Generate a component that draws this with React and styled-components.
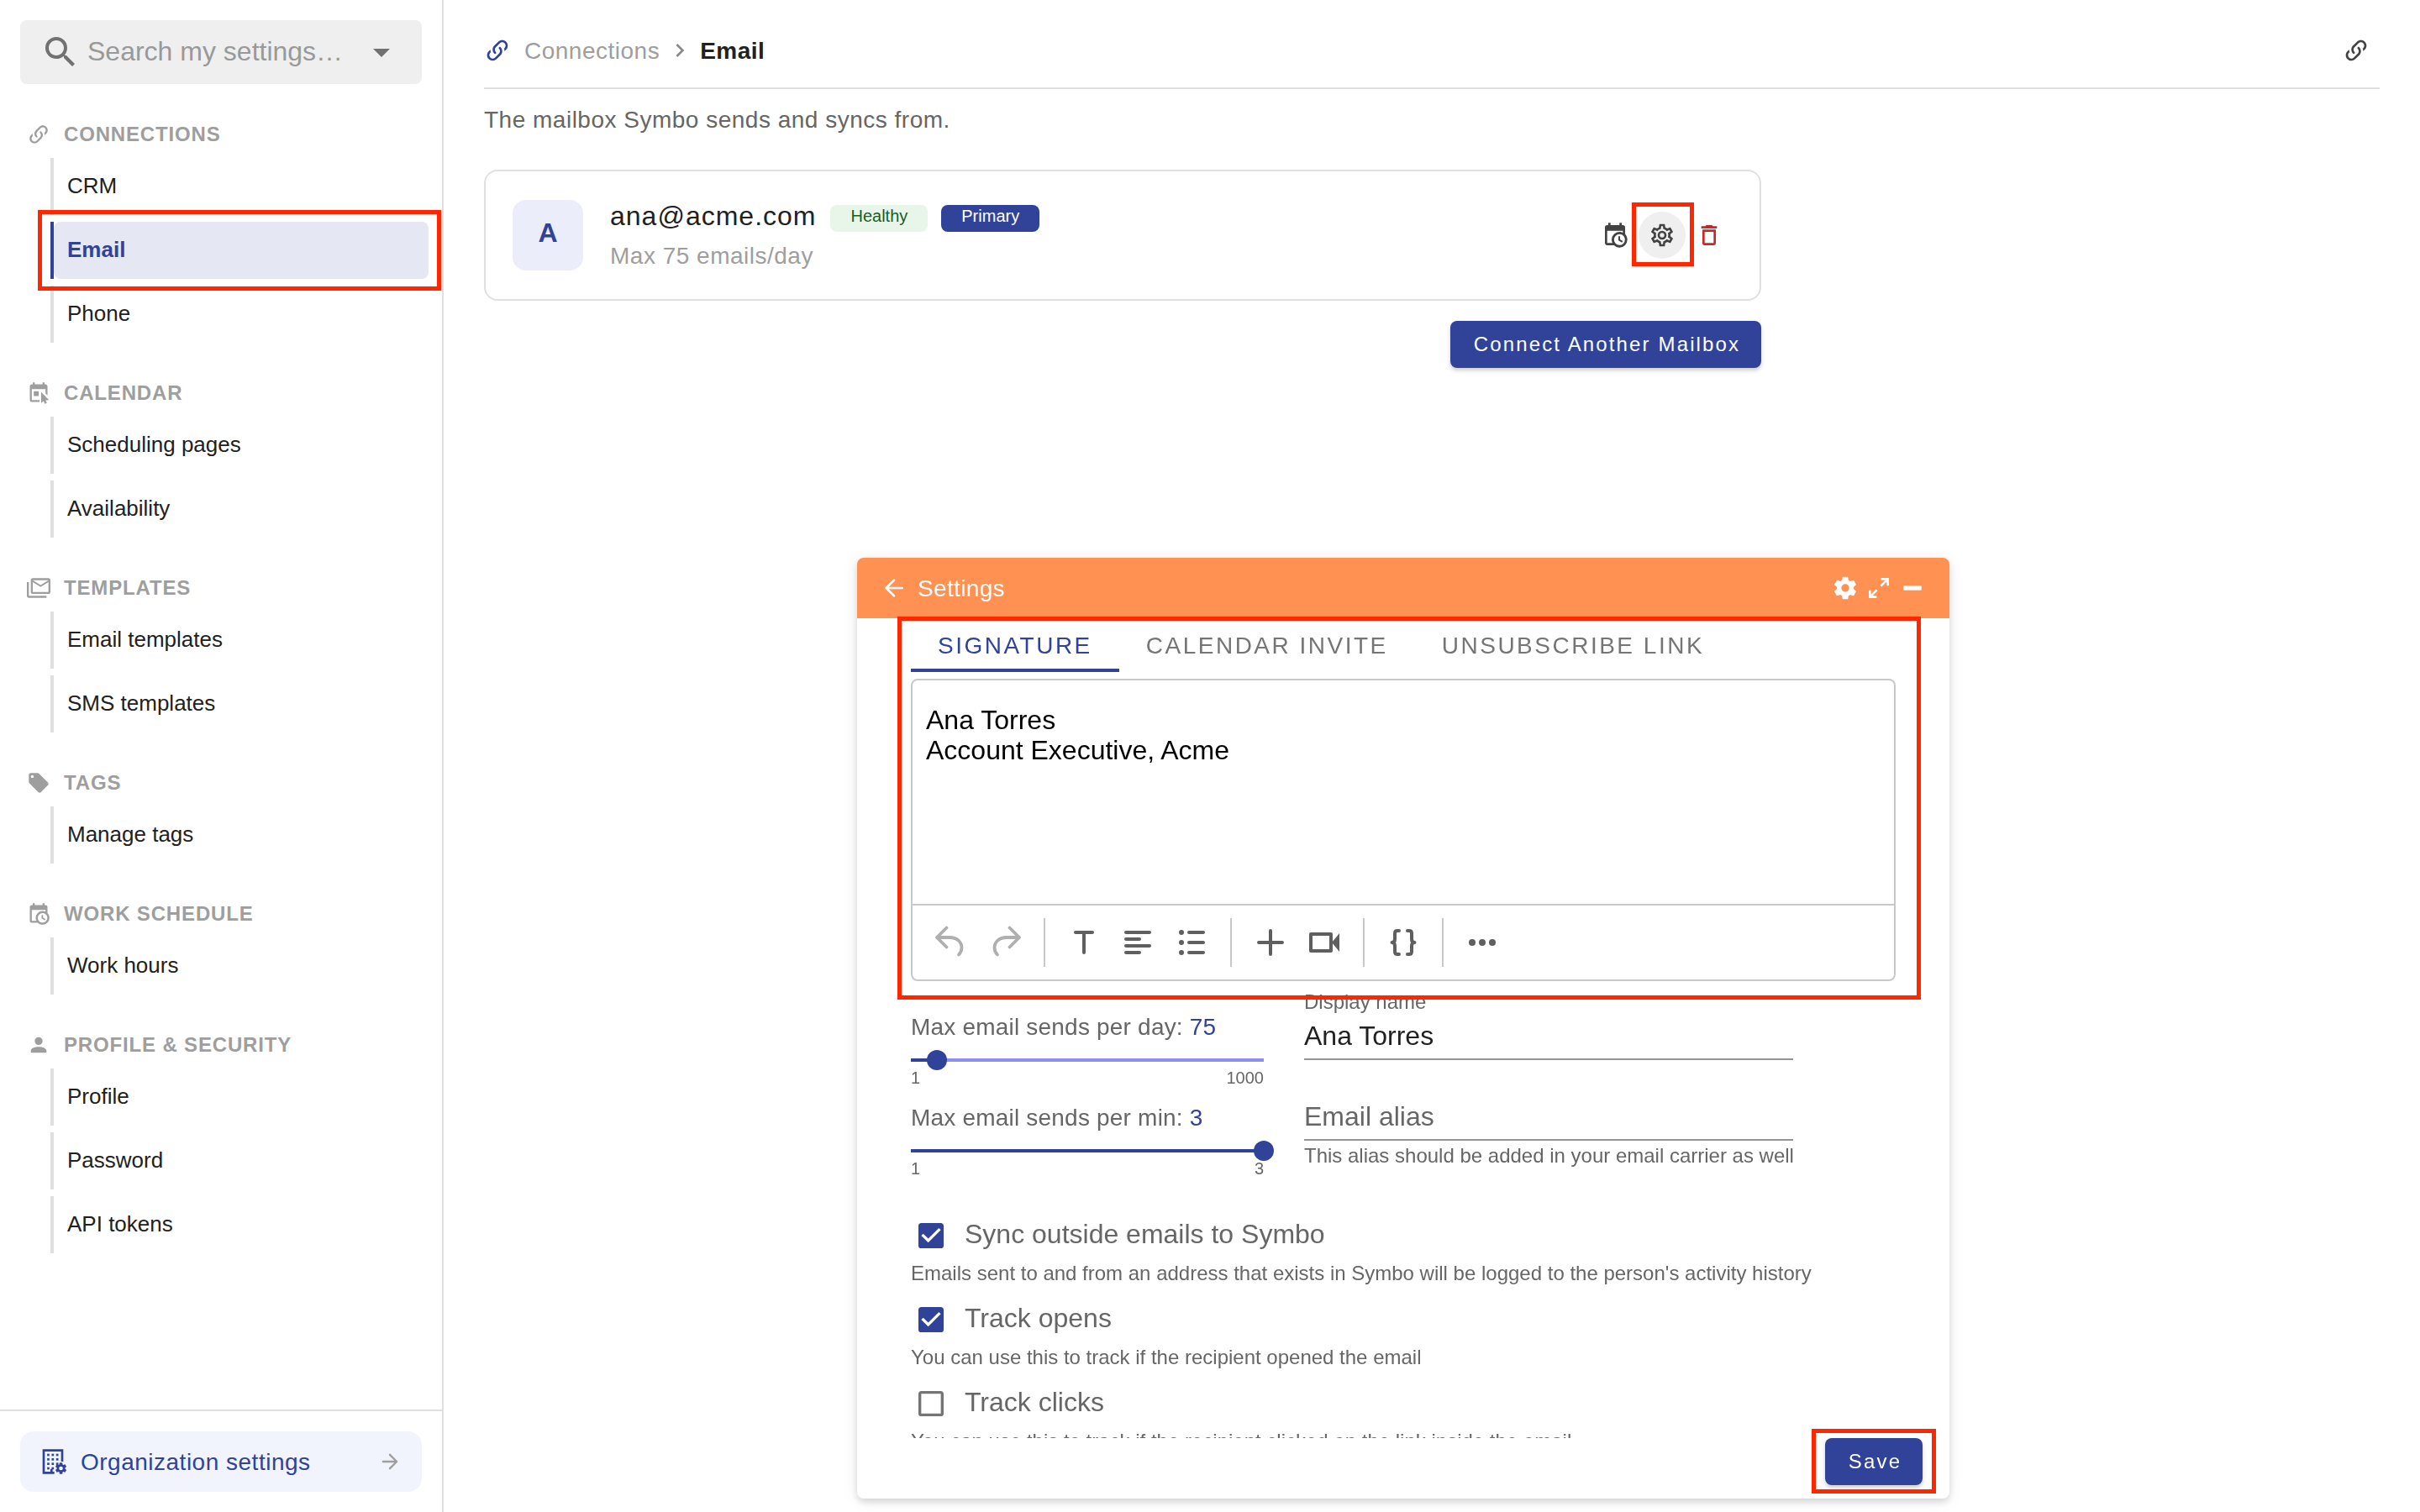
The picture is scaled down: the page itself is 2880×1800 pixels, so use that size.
import React, { useState } from "react";
import styled, { createGlobalStyle, css } from "styled-components";

const colors = {
  primary: "#304399",
  text: "#212121",
  muted: "#666666",
  faint: "#9e9e9e",
  line: "#e0e0e0",
  accent: "#ff9153",
  mark: "#ff2600",
};

const GlobalStyle = createGlobalStyle`
  * {
    box-sizing: border-box;
  }
  body {
    margin: 0;
    overflow: hidden;
    background: #fff;
    color: ${colors.text};
    font-family: "Liberation Sans", Arial, sans-serif;
  }
  button {
    font-family: inherit;
    border: 0;
    padding: 0;
    cursor: pointer;
  }
`;

// icon paths, 24x24 grid
const paths = {
  magnify:
    "M9.5,3A6.5,6.5 0 0,1 16,9.5C16,11.11 15.41,12.59 14.44,13.73L14.71,14H15.5L20.5,19L19,20.5L14,15.5V14.71L13.73,14.44C12.59,15.41 11.11,16 9.5,16A6.5,6.5 0 0,1 3,9.5A6.5,6.5 0 0,1 9.5,3M9.5,5C7,5 5,7 5,9.5C5,12 7,14 9.5,14C12,14 14,12 14,9.5C14,7 12,5 9.5,5Z",
  menuDown: "M7,10L12,15L17,10H7Z",
  link: "M10.59,13.41C11,13.8 11,14.44 10.59,14.83C10.2,15.22 9.56,15.22 9.17,14.83C7.22,12.88 7.22,9.71 9.17,7.76V7.76L12.71,4.22C14.66,2.27 17.83,2.27 19.78,4.22C21.73,6.17 21.73,9.34 19.78,11.29L18.29,12.78C18.3,11.96 18.17,11.14 17.89,10.36L18.36,9.88C19.54,8.71 19.54,6.81 18.36,5.64C17.19,4.46 15.29,4.46 14.12,5.64L10.59,9.17C9.41,10.34 9.41,12.24 10.59,13.41M13.41,9.17C13.8,8.78 14.44,8.78 14.83,9.17C16.78,11.12 16.78,14.29 14.83,16.24V16.24L11.29,19.78C9.34,21.73 6.17,21.73 4.22,19.78C2.27,17.83 2.27,14.66 4.22,12.71L5.71,11.22C5.7,12.04 5.83,12.86 6.11,13.65L5.64,14.12C4.46,15.29 4.46,17.19 5.64,18.36C6.81,19.54 8.71,19.54 9.88,18.36L13.41,14.83C14.59,13.66 14.59,11.76 13.41,10.59C13,10.2 13,9.56 13.41,9.17Z",
  calendarCursor:
    "M19,3H18V1H16V3H8V1H6V3H5C3.89,3 3,3.9 3,5V19C3,20.1 3.89,21 5,21H13V19H5V8H19V12.5L21,14.3V5C21,3.9 20.1,3 19,3M7,10V15H12V10H7M14.5,11V22L17,20.2L18.3,23L20.4,22L19.1,19.3L22.5,19L14.5,11Z",
  mailMultiple:
    "M22,2H6C4.9,2 4,2.9 4,4V16C4,17.1 4.9,18 6,18H22C23.1,18 24,17.1 24,16V4C24,2.9 23.1,2 22,2M22,16H6V6L14,11L22,6V16M14,9L6,4H22L14,9M2,6H0V20C0,21.1 0.9,22 2,22H20V20H2V6Z",
  tag: "M5.5,7A1.5,1.5 0 0,1 4,5.5A1.5,1.5 0 0,1 5.5,4A1.5,1.5 0 0,1 7,5.5A1.5,1.5 0 0,1 5.5,7M21.41,11.58L12.41,2.58C12.05,2.22 11.55,2 11,2H4C2.89,2 2,2.89 2,4V11C2,11.55 2.22,12.05 2.59,12.41L11.58,21.41C11.95,21.77 12.45,22 13,22C13.55,22 14.05,21.77 14.41,21.41L21.41,14.41C21.78,14.05 22,13.55 22,13C22,12.44 21.77,11.94 21.41,11.58Z",
  calendarClock:
    "M15,13H16.5V15.82L18.94,17.23L18.19,18.53L15,16.69V13M19,8H5V19H9.67C9.24,18.09 9,17.07 9,16A7,7 0 0,1 16,9C17.07,9 18.09,9.24 19,9.67V8M5,21C3.89,21 3,20.1 3,19V5C3,3.89 3.89,3 5,3H6V1H8V3H16V1H18V3H19A2,2 0 0,1 21,5V11.1C22.24,12.36 23,14.09 23,16A7,7 0 0,1 16,23C14.09,23 12.36,22.24 11.1,21H5M16,11.15A4.85,4.85 0 0,0 11.15,16C11.15,18.68 13.32,20.85 16,20.85A4.85,4.85 0 0,0 20.85,16C20.85,13.32 18.68,11.15 16,11.15Z",
  account:
    "M12,4A4,4 0 0,1 16,8A4,4 0 0,1 12,12A4,4 0 0,1 8,8A4,4 0 0,1 12,4M12,14C16.42,14 20,15.79 20,18V20H4V18C4,15.79 7.58,14 12,14Z",
  chevronRight:
    "M8.59,16.58L13.17,12L8.59,7.41L10,6L16,12L10,18L8.59,16.58Z",
  cogOutline:
    "M12,8A4,4 0 0,1 16,12A4,4 0 0,1 12,16A4,4 0 0,1 8,12A4,4 0 0,1 12,8M12,10A2,2 0 0,0 10,12A2,2 0 0,0 12,14A2,2 0 0,0 14,12A2,2 0 0,0 12,10M10,22C9.75,22 9.54,21.82 9.5,21.58L9.13,18.93C8.5,18.68 7.96,18.34 7.44,17.94L4.95,18.95C4.73,19.03 4.46,18.95 4.34,18.73L2.34,15.27C2.21,15.05 2.27,14.78 2.46,14.63L4.57,12.97L4.5,12L4.57,11L2.46,9.37C2.27,9.22 2.21,8.95 2.34,8.73L4.34,5.27C4.46,5.05 4.73,4.96 4.95,5.05L7.44,6.05C7.96,5.66 8.5,5.32 9.13,5.07L9.5,2.42C9.54,2.18 9.75,2 10,2H14C14.25,2 14.46,2.18 14.5,2.42L14.87,5.07C15.5,5.32 16.04,5.66 16.56,6.05L19.05,5.05C19.27,4.96 19.54,5.05 19.66,5.27L21.66,8.73C21.79,8.95 21.73,9.22 21.54,9.37L19.43,11L19.5,12L19.43,13L21.54,14.63C21.73,14.78 21.79,15.05 21.66,15.27L19.66,18.73C19.54,18.95 19.27,19.04 19.05,18.95L16.56,17.95C16.04,18.34 15.5,18.68 14.87,18.93L14.5,21.58C14.46,21.82 14.25,22 14,22H10M11.25,4L10.88,6.61C9.68,6.86 8.62,7.5 7.85,8.39L5.44,7.35L4.69,8.65L6.8,10.2C6.4,11.37 6.4,12.64 6.8,13.8L4.68,15.36L5.43,16.66L7.86,15.62C8.63,16.5 9.68,17.14 10.87,17.38L11.24,20H12.76L13.13,17.39C14.32,17.14 15.37,16.5 16.14,15.62L18.57,16.66L19.32,15.36L17.2,13.81C17.6,12.64 17.6,11.37 17.2,10.2L19.31,8.65L18.56,7.35L16.15,8.39C15.38,7.5 14.32,6.86 13.12,6.62L12.75,4H11.25Z",
  cog: "M12,15.5A3.5,3.5 0 0,1 8.5,12A3.5,3.5 0 0,1 12,8.5A3.5,3.5 0 0,1 15.5,12A3.5,3.5 0 0,1 12,15.5M19.43,12.97C19.47,12.65 19.5,12.33 19.5,12C19.5,11.67 19.47,11.34 19.43,11L21.54,9.37C21.73,9.22 21.78,8.95 21.66,8.73L19.66,5.27C19.54,5.05 19.27,4.96 19.05,5.05L16.56,6.05C16.04,5.66 15.5,5.32 14.87,5.07L14.5,2.42C14.46,2.18 14.25,2 14,2H10C9.75,2 9.54,2.18 9.5,2.42L9.13,5.07C8.5,5.32 7.96,5.66 7.44,6.05L4.95,5.05C4.73,4.96 4.46,5.05 4.34,5.27L2.34,8.73C2.21,8.95 2.27,9.22 2.46,9.37L4.57,11C4.53,11.34 4.5,11.67 4.5,12C4.5,12.33 4.53,12.65 4.57,12.97L2.46,14.63C2.27,14.78 2.21,15.05 2.34,15.27L4.34,18.73C4.46,18.95 4.73,19.03 4.95,18.95L7.44,17.94C7.96,18.34 8.5,18.68 9.13,18.93L9.5,21.58C9.54,21.82 9.75,22 10,22H14C14.25,22 14.46,21.82 14.5,21.58L14.87,18.93C15.5,18.67 16.04,18.34 16.56,17.94L19.05,18.95C19.27,19.03 19.54,18.95 19.66,18.73L21.66,15.27C21.78,15.05 21.73,14.78 21.54,14.63L19.43,12.97Z",
  trash:
    "M6,19A2,2 0 0,0 8,21H16A2,2 0 0,0 18,19V7H6V19M8,9H16V19H8V9M15.5,4L14.5,3H9.5L8.5,4H5V6H19V4H15.5Z",
  expand:
    "M10,21V19H6.41L10.91,14.5L9.5,13.09L5,17.59V14H3V21H10M14.5,10.91L19,6.41V10H21V3H14V5H17.59L13.09,9.5L14.5,10.91Z",
  minus: "M20,14H4V10H20V14Z",
  checkboxOn:
    "M10,17L5,12L6.41,10.58L10,14.17L17.59,6.58L19,8M19,3H5C3.89,3 3,3.89 3,5V19A2,2 0 0,0 5,21H19A2,2 0 0,0 21,19V5C21,3.89 20.1,3 19,3Z",
  checkboxOff:
    "M19,3H5C3.89,3 3,3.89 3,5V19A2,2 0 0,0 5,21H19A2,2 0 0,0 21,19V5C21,3.89 20.1,3 19,3M19,5V19H5V5H19Z",
};

const Svg = styled.svg`
  display: block;
  flex: none;
  width: ${(p) => p.$size}px;
  height: ${(p) => p.$size}px;
  color: ${(p) => p.$color || "inherit"};
`;

const Icon = ({ name, size = 32, color }) => (
  <Svg viewBox="0 0 24 24" $size={size} $color={color}>
    <path d={paths[name]} fill="currentColor" />
  </Svg>
);

const ArrowIcon = ({ left, size, color }) => (
  <Svg
    viewBox="0 0 24 24"
    $size={size}
    $color={color}
    fill="none"
    stroke="currentColor"
    strokeWidth="2"
    strokeLinecap="round"
    strokeLinejoin="round"
  >
    <path d={left ? "M19.3 12H5M12 19L5 12L12 5" : "M5 12H19M12 5L19 12L12 19"} />
  </Svg>
);

const OfficeCogIcon = () => (
  <Svg viewBox="0 0 24 24" $size={32} $color={colors.primary}>
    <path
      d="M2,1H20.5V12H18.5V3H4V21H9V18.5H11V21H12.5V23H2V1Z"
      fill="currentColor"
    />
    {[5, 9, 13, 17].map((y) =>
      [6.1, 10.1, 14.1]
        .filter((x) => !(y === 17 && x > 11) && !(y === 13 && x > 14.2))
        .map((x) => (
          <rect key={`${x}-${y}`} x={x} y={y} width="2" height="2" fill="currentColor" />
        ))
    )}
    <g transform="translate(12.4 12) scale(0.5)">
      <path d={paths.cog} fill="currentColor" />
    </g>
  </Svg>
);

/* sidebar */

const Page = styled.div`
  display: flex;
  height: 1800px;
`;

const Sidebar = styled.aside`
  display: flex;
  flex-direction: column;
  width: 528px;
  flex: none;
  border-right: 2px solid ${colors.line};
`;

const SearchBox = styled.div`
  display: flex;
  align-items: center;
  height: 76px;
  margin: 24px 24px 0;
  padding: 0 24px;
  border-radius: 8px;
  background: #efefef;
  color: #717171;
`;

const SearchText = styled.span`
  flex: 1;
  margin-left: 8px;
  padding-bottom: 2px;
  font-size: 32px;
  line-height: 40px;
  color: #999;
`;

const Sections = styled.nav`
  flex: 1;
`;

const Section = styled.section`
  margin-top: 32px;
`;

const SectionTitle = styled.div`
  display: flex;
  align-items: center;
  gap: 16px;
  height: 56px;
  padding-left: 32px;
  font-size: 24px;
  font-weight: 700;
  letter-spacing: 0.84px;
  color: ${colors.faint};
`;

const NavList = styled.div`
  display: flex;
  flex-direction: column;
  gap: 8px;
  padding: 0 16px 0 60px;
`;

const NavItem = styled.div`
  position: relative;
  display: flex;
  height: 68px;
  font-size: 26px;
  line-height: 66px;
  border-left: 4px solid ${colors.line};

  ${(p) =>
    p.$active &&
    css`
      border-color: ${colors.primary};
      color: ${colors.primary};
      font-weight: 700;
    `}
`;

const NavLabel = styled.span`
  flex: 1;
  padding-left: 16px;
  border-radius: 8px;
  background: ${(p) => (p.$active ? "#e5e8f3" : "transparent")};
`;

const SidebarFooter = styled.div`
  padding: 24px;
  border-top: 2px solid ${colors.line};
`;

const OrgLink = styled.div`
  display: flex;
  align-items: center;
  height: 72px;
  padding: 0 24px;
  gap: 16px;
  border-radius: 16px;
  background: #f2f4fd;
  color: ${colors.primary};
  font-size: 28px;
  letter-spacing: 0.5px;
`;

const OrgLabel = styled.span`
  flex: 1;
  padding-top: 1px;
`;

/* main column */

const Main = styled.main`
  flex: 1;
  padding: 0 48px;
`;

const Crumbs = styled.header`
  display: flex;
  align-items: flex-start;
  height: 106px;
  padding: 44px 12px 0 0;
  border-bottom: 2px solid ${colors.line};
  font-size: 28px;
  line-height: 34px;
  letter-spacing: 0.5px;
`;

const Crumb = styled.span`
  margin-left: 16px;
  margin-right: 8px;
  color: ${colors.faint};
`;

const CrumbCurrent = styled.span`
  flex: 1;
  margin-left: 8px;
  font-weight: 700;
`;

const Lead = styled.p`
  margin: 0;
  height: 96px;
  padding-top: 21px;
  font-size: 28px;
  line-height: 32px;
  letter-spacing: 0.5px;
  color: ${colors.muted};
`;

const Content = styled.div`
  display: flex;
  flex-direction: column;
  align-items: flex-end;
  gap: 24px;
  width: 1520px;
`;

const Card = styled.div`
  display: flex;
  align-items: center;
  width: 100%;
  height: 156px;
  padding: 0 32px;
  border: 2px solid ${colors.line};
  border-radius: 16px;
`;

const Avatar = styled.div`
  width: 84px;
  height: 84px;
  border-radius: 16px;
  background: #ebedfb;
  color: ${colors.primary};
  font-size: 32px;
  font-weight: 700;
  line-height: 78px;
  text-align: center;
`;

const MailboxInfo = styled.div`
  flex: 1;
  margin-left: 32px;
  padding-top: 2px;
`;

const MailboxRow = styled.div`
  display: flex;
  align-items: center;
  gap: 16px;
  height: 42px;
`;

const Address = styled.span`
  margin: -6px 1px 0 0;
  font-size: 32px;
  line-height: 38px;
  letter-spacing: 1px;
`;

const Chip = styled.span`
  height: 32px;
  padding: 0 24px;
  border-radius: 8px;
  font-size: 20px;
  line-height: 26px;
  background: ${(p) => (p.$solid ? colors.primary : "#e8f5e9")};
  color: ${(p) => (p.$solid ? "#fff" : "#1b5e20")};
`;

const Limit = styled.div`
  margin-top: 6px;
  font-size: 28px;
  line-height: 36px;
  letter-spacing: 0.5px;
  color: ${colors.faint};
`;

const IconButton = styled.button`
  position: relative;
  display: flex;
  align-items: center;
  justify-content: center;
  width: 56px;
  height: 56px;
  border-radius: 50%;
  background: ${(p) => (p.$active ? "#efefef" : "transparent")};
  color: ${(p) => (p.$danger ? "#c62828" : "#424242")};
`;

const PrimaryButton = styled.button`
  height: 56px;
  width: ${(p) => p.$width}px;
  padding-left: 3px;
  border-radius: 8px;
  background: ${colors.primary};
  color: #fff;
  font-size: 24px;
  letter-spacing: 0.0892857em;
  box-shadow: 0 3px 5px rgba(0, 0, 0, 0.2);
`;

// red frame drawn over its parent, $box = top right bottom left
const Marker = styled.div`
  position: absolute;
  inset: ${(p) => p.$box};
  z-index: 2;
  border: 5px solid ${colors.mark};
  pointer-events: none;
`;

/* settings window */

const Window = styled.div`
  position: fixed;
  left: 1020px;
  top: 664px;
  width: 1300px;
  height: 1120px;
  display: flex;
  flex-direction: column;
  border-radius: 8px;
  background: #fff;
  box-shadow: 0 4px 8px rgba(0, 0, 0, 0.14), 0 2px 20px rgba(0, 0, 0, 0.07);
  will-change: transform;
`;

const TitleBar = styled.div`
  display: flex;
  align-items: center;
  gap: 8px;
  height: 72px;
  flex: none;
  padding: 0 28px;
  border-radius: 8px 8px 0 0;
  background: ${colors.accent};
  color: #fff;
`;

const Title = styled.span`
  flex: 1;
  margin-left: 4px;
  padding-top: 2px;
  font-size: 28px;
  line-height: 36px;
  letter-spacing: 0.0125em;
`;

const Body = styled.div`
  flex: 1;
  min-height: 0;
  overflow: hidden;
  padding: 0 64px;
`;

const Tabs = styled.div`
  display: flex;
  height: 64px;
  margin-bottom: 8px;
`;

const Tab = styled.div`
  padding: 0 32px;
  font-size: 28px;
  line-height: 66px;
  height: 64px;
  letter-spacing: 0.0892857em;
  color: ${(p) => (p.$active ? colors.primary : "#757575")};
  box-shadow: ${(p) => (p.$active ? `inset 0 -4px ${colors.primary}` : "none")};
`;

const Editor = styled.div`
  display: flex;
  flex-direction: column;
  height: 360px;
  border: 2px solid #c8c8c8;
  border-radius: 8px;
`;

const EditorText = styled.div`
  flex: 1;
  padding: 29px 16px 0;
  font-size: 32px;
  line-height: 36px;
  color: #000;
`;

const Toolbar = styled.div`
  display: flex;
  align-items: center;
  height: 90px;
  padding-left: 14px;
  border-top: 2px solid #c8c8c8;
`;

const ToolButton = styled.button`
  display: flex;
  align-items: center;
  justify-content: center;
  width: 64px;
  height: 64px;
  background: none;
  color: ${(p) => (p.disabled ? "#afafaf" : "#5f5f5f")};
`;

const Divider = styled.span`
  width: 2px;
  height: 58px;
  margin: 0 14px;
  background: #c8c8c8;
`;

const Fields = styled.div`
  display: grid;
  grid-template-columns: 420px 582px;
  column-gap: 48px;
  margin-top: 10px;
  height: 273px;
`;

const SliderColumn = styled.div`
  padding-top: 27px;
`;

const SliderBlock = styled.div`
  height: 108px;
  color: ${colors.muted};
`;

const SliderLabel = styled.div`
  font-size: 28px;
  line-height: 36px;
  letter-spacing: 0.2px;

  b {
    font-weight: 400;
    color: ${colors.primary};
  }
`;

const Track = styled.div`
  position: relative;
  display: flex;
  height: 4px;
  margin: 19px 0 8px;
  background: #8b8ff0;
`;

const Fill = styled.div`
  background: ${colors.primary};
`;

const Thumb = styled.div`
  flex: none;
  width: 24px;
  height: 24px;
  margin: -10px -12px;
  border-radius: 50%;
  background: ${colors.primary};
`;

const Ticks = styled.div`
  display: flex;
  justify-content: space-between;
  font-size: 20px;
  line-height: 22px;
`;

const FieldColumn = styled.div`
  color: ${colors.muted};
  font-size: 32px;
  line-height: 42px;
`;

const FieldLabel = styled.div`
  height: 34px;
  font-size: 24px;
  line-height: 30px;
`;

const FieldValue = styled.div`
  height: 50px;
  border-bottom: 2px solid #949494;
  color: ${(p) => (p.$filled ? colors.text : colors.muted)};
`;

const FieldGap = styled.div`
  height: 46px;
`;

const Hint = styled.div`
  margin-top: 4px;
  font-size: 24px;
  line-height: 28px;
  white-space: nowrap;
`;

const Option = styled.div`
  height: 100px;
  color: ${colors.muted};
`;

const OptionRow = styled.div`
  display: flex;
  gap: 20px;
  height: 51px;
  padding-left: 4px;
  font-size: 32px;
  line-height: 36px;
`;

const OptionHint = styled.div`
  font-size: 24px;
  line-height: 28px;
`;

const Footer = styled.div`
  display: flex;
  justify-content: flex-end;
  height: 72px;
  flex: none;
  padding-right: 32px;
`;

const SaveWrap = styled.div`
  position: relative;
  height: 56px;
`;

const sections = [
  { title: "CONNECTIONS", icon: "link", items: ["CRM", "Email", "Phone"] },
  {
    title: "CALENDAR",
    icon: "calendarCursor",
    items: ["Scheduling pages", "Availability"],
  },
  {
    title: "TEMPLATES",
    icon: "mailMultiple",
    items: ["Email templates", "SMS templates"],
  },
  { title: "TAGS", icon: "tag", items: ["Manage tags"] },
  { title: "WORK SCHEDULE", icon: "calendarClock", items: ["Work hours"] },
  {
    title: "PROFILE & SECURITY",
    icon: "account",
    items: ["Profile", "Password", "API tokens"],
  },
];

const tabs = ["SIGNATURE", "CALENDAR INVITE", "UNSUBSCRIBE LINK"];

const options = [
  {
    label: "Sync outside emails to Symbo",
    hint: "Emails sent to and from an address that exists in Symbo will be logged to the person's activity history",
    checked: true,
  },
  {
    label: "Track opens",
    hint: "You can use this to track if the recipient opened the email",
    checked: true,
  },
  {
    label: "Track clicks",
    hint: "You can use this to track if the recipient clicked on the link inside the email",
    checked: false,
  },
];

// toolbar drawings, 48x48 grid
const tools = [
  [
    {
      key: "undo",
      disabled: true,
      stroke: 3.8,
      d: "M18.5,6.5L7,18L18.5,29.5M7,18H22C31,18 36.5,23.5 36.5,30Q36.5,35 33,38.5",
    },
    {
      key: "redo",
      disabled: true,
      stroke: 3.8,
      d: "M29.5,6.5L41,18L29.5,29.5M41,18H26C17,18 11.5,23.5 11.5,30Q11.5,35 15,38.5",
    },
  ],
  [
    { key: "text", d: "M14,12H34M24,12V36" },
    { key: "align", d: "M10,12H38M10,20H26M10,28H38M10,36H26" },
    {
      key: "list",
      d: "M21,12H38M21,24H38M21,36H38",
      dots: "M12,12H12.01M12,24H12.01M12,36H12.01",
    },
  ],
  [
    { key: "plus", d: "M10,24H38M24,10V38" },
    { key: "video", d: "M8,14H32V34H8Z", fill: "M33,24L42,13V35Z" },
  ],
  [
    {
      key: "braces",
      d: "M19,10H17Q14,10 14,13V20Q14,24 10.5,24Q14,24 14,28V35Q14,38 17,38H19M29,10H31Q34,10 34,13V20Q34,24 37.5,24Q34,24 34,28V35Q34,38 31,38H29",
    },
  ],
  [{ key: "more", stroke: 8, d: "M12,24H12.01M24,24H24.01M36,24H36.01" }],
];

const ToolIcon = ({ tool }) => (
  <Svg
    viewBox="0 0 48 48"
    $size={48}
    fill="none"
    stroke="currentColor"
    strokeLinecap="round"
    strokeLinejoin="round"
  >
    <path d={tool.d} strokeWidth={tool.stroke || 4} />
    {tool.dots && <path d={tool.dots} strokeWidth="6" />}
    {tool.fill && <path d={tool.fill} fill="currentColor" stroke="none" />}
  </Svg>
);

const Slider = ({ label, value, min, max }) => {
  const percent = ((value - min) / (max - min)) * 100;
  return (
    <SliderBlock>
      <SliderLabel>
        {label}: <b>{value}</b>
      </SliderLabel>
      <Track>
        <Fill style={{ width: `${percent}%` }} />
        <Thumb />
      </Track>
      <Ticks>
        <span>{min}</span>
        <span>{max}</span>
      </Ticks>
    </SliderBlock>
  );
};

function SettingsNav() {
  const [current] = useState("Email");
  return (
    <Sidebar>
      <SearchBox>
        <Icon name="magnify" size={48} />
        <SearchText>Search my settings…</SearchText>
        <Icon name="menuDown" size={48} />
      </SearchBox>
      <Sections>
        {sections.map((section) => (
          <Section key={section.title}>
            <SectionTitle>
              <Icon name={section.icon} size={28} />
              {section.title}
            </SectionTitle>
            <NavList>
              {section.items.map((item) => (
                <NavItem key={item} $active={item === current}>
                  <NavLabel $active={item === current}>{item}</NavLabel>
                  {item === current && <Marker $box="-14px -15px -14px -19px" />}
                </NavItem>
              ))}
            </NavList>
          </Section>
        ))}
      </Sections>
      <SidebarFooter>
        <OrgLink>
          <OfficeCogIcon />
          <OrgLabel>Organization settings</OrgLabel>
          <ArrowIcon size={28} color={colors.faint} />
        </OrgLink>
      </SidebarFooter>
    </Sidebar>
  );
}

function SettingsWindow() {
  return (
    <Window>
      <TitleBar>
        <ArrowIcon left size={32} />
        <Title>Settings</Title>
        <Icon name="cog" />
        <Icon name="expand" />
        <Icon name="minus" />
      </TitleBar>
      <Body>
        <Tabs>
          {tabs.map((tab, idx) => (
            <Tab key={tab} $active={idx === 0}>
              {tab}
            </Tab>
          ))}
        </Tabs>
        <Editor>
          <EditorText>
            <div>Ana Torres</div>
            <div>Account Executive, Acme</div>
          </EditorText>
          <Toolbar>
            {tools.map((group, idx) => (
              <React.Fragment key={idx}>
                {idx > 0 && <Divider />}
                {group.map((tool) => (
                  <ToolButton key={tool.key} disabled={tool.disabled}>
                    <ToolIcon tool={tool} />
                  </ToolButton>
                ))}
              </React.Fragment>
            ))}
          </Toolbar>
        </Editor>
        <Fields>
          <SliderColumn>
            <Slider label="Max email sends per day" value={75} min={1} max={1000} />
            <Slider label="Max email sends per min" value={3} min={1} max={3} />
          </SliderColumn>
          <FieldColumn>
            <FieldLabel>Display name</FieldLabel>
            <FieldValue $filled>Ana Torres</FieldValue>
            <FieldGap />
            <FieldValue>Email alias</FieldValue>
            <Hint>This alias should be added in your email carrier as well</Hint>
          </FieldColumn>
        </Fields>
        {options.map((option) => (
          <Option key={option.label}>
            <OptionRow>
              <Icon
                name={option.checked ? "checkboxOn" : "checkboxOff"}
                size={40}
                color={option.checked ? colors.primary : "#757575"}
              />
              {option.label}
            </OptionRow>
            <OptionHint>{option.hint}</OptionHint>
          </Option>
        ))}
      </Body>
      <Footer>
        <SaveWrap>
          <PrimaryButton $width={116}>Save</PrimaryButton>
          <Marker $box="-11px -16px -10px -16px" />
        </SaveWrap>
      </Footer>
      <Marker $box="70px 34px 594px 48px" />
    </Window>
  );
}

export default function App() {
  return (
    <Page>
      <GlobalStyle />
      <SettingsNav />
      <Main>
        <Crumbs>
          <Icon name="link" color={colors.primary} />
          <Crumb>Connections</Crumb>
          <Icon name="chevronRight" color="#8a8a8a" />
          <CrumbCurrent>Email</CrumbCurrent>
          <Icon name="link" color="#424242" />
        </Crumbs>
        <Lead>The mailbox Symbo sends and syncs from.</Lead>
        <Content>
          <Card>
            <Avatar>A</Avatar>
            <MailboxInfo>
              <MailboxRow>
                <Address>ana@acme.com</Address>
                <Chip>Healthy</Chip>
                <Chip $solid>Primary</Chip>
              </MailboxRow>
              <Limit>Max 75 emails/day</Limit>
            </MailboxInfo>
            <IconButton>
              <Icon name="calendarClock" />
            </IconButton>
            <IconButton $active>
              <Icon name="cogOutline" />
              <Marker $box="-11px -10px -9px -8px" />
            </IconButton>
            <IconButton $danger>
              <Icon name="trash" />
            </IconButton>
          </Card>
          <PrimaryButton $width={370}>Connect Another Mailbox</PrimaryButton>
        </Content>
      </Main>
      <SettingsWindow />
    </Page>
  );
}
